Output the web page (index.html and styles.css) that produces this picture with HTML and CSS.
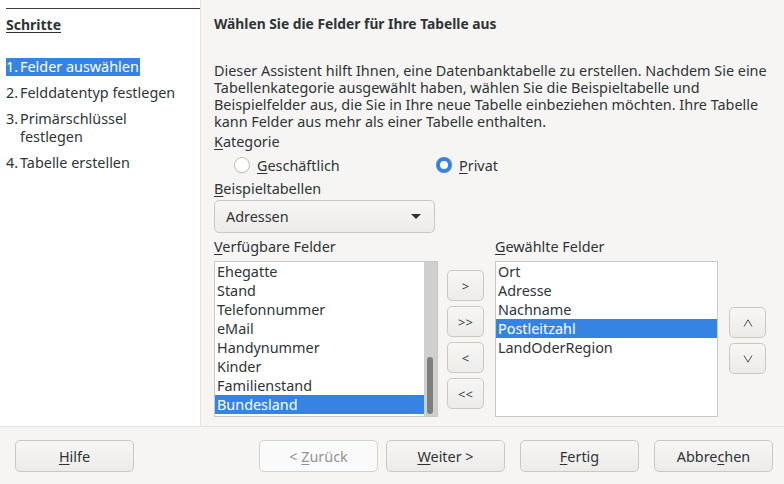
FILE: index.html
```html
<!DOCTYPE html>
<html lang="de">
<head>
<meta charset="utf-8">
<link rel="stylesheet" href="styles.css">
</head>
<body>
<div class="wizard">
  <div class="top">
    <aside class="sidebar">
      <div class="side-head"><span class="side-title">Schritte</span></div>
      <ol class="steps">
        <li class="step"><span class="sel"><span class="num">1.</span>Felder auswählen</span></li>
        <li class="step"><span class="num">2.</span><span>Felddatentyp festlegen</span></li>
        <li class="step"><span class="num">3.</span><span>Primärschlüssel<br>festlegen</span></li>
        <li class="step"><span class="num">4.</span><span>Tabelle erstellen</span></li>
      </ol>
    </aside>
    <main class="main">
      <h1 class="title">Wählen Sie die Felder für Ihre Tabelle aus</h1>
      <div class="intro">
        <div class="line">Dieser Assistent hilft Ihnen, eine Datenbanktabelle zu erstellen. Nachdem Sie eine</div>
        <div class="line">Tabellenkategorie ausgewählt haben, wählen Sie die Beispieltabelle und</div>
        <div class="line">Beispielfelder aus, die Sie in Ihre neue Tabelle einbeziehen möchten. Ihre Tabelle</div>
        <div class="line">kann Felder aus mehr als einer Tabelle enthalten.</div>
      </div>
      <div class="label"><u>K</u>ategorie</div>
      <div class="radios">
        <label class="radio"><span class="circle"></span><span><u>G</u>eschäftlich</span></label>
        <label class="radio"><span class="circle on"></span><span><u>P</u>rivat</span></label>
      </div>
      <div class="label"><u>B</u>eispieltabellen</div>
      <div class="combo"><span>Adressen</span><span class="caret"></span></div>
      <div class="lists">
        <div class="col-left">
          <div class="label"><u>V</u>erfügbare Felder</div>
          <div class="listbox avail">
            <div class="items">
              <div class="item">Ehegatte</div>
              <div class="item">Stand</div>
              <div class="item">Telefonnummer</div>
              <div class="item">eMail</div>
              <div class="item">Handynummer</div>
              <div class="item">Kinder</div>
              <div class="item">Familienstand</div>
              <div class="item selected">Bundesland</div>
            </div>
            <div class="scrollbar"><div class="thumb"></div></div>
          </div>
        </div>
        <div class="movers">
          <button class="btn small"><span>&gt;</span></button>
          <button class="btn small"><span>&gt;&gt;</span></button>
          <button class="btn small"><span>&lt;</span></button>
          <button class="btn small"><span>&lt;&lt;</span></button>
        </div>
        <div class="col-right">
          <div class="label"><u>G</u>ewählte Felder</div>
          <div class="listbox chosen">
            <div class="items">
              <div class="item">Ort</div>
              <div class="item">Adresse</div>
              <div class="item">Nachname</div>
              <div class="item selected">Postleitzahl</div>
              <div class="item">LandOderRegion</div>
            </div>
          </div>
        </div>
        <div class="order">
          <button class="btn small" aria-label="Nach oben"><svg width="10" height="8" viewBox="0 0 10 8"><polyline points="1,7.5 5,0.8 9,7.5" fill="none" stroke="#4a4f51" stroke-width="1"/></svg></button>
          <button class="btn small" aria-label="Nach unten"><svg width="10" height="8" viewBox="0 0 10 8"><polyline points="1,0.5 5,7.2 9,0.5" fill="none" stroke="#4a4f51" stroke-width="1"/></svg></button>
        </div>
      </div>
    </main>
  </div>
  <div class="bottom">
    <button class="btn big"><span><u>H</u>ilfe</span></button>
    <div class="spacer"></div>
    <button class="btn big disabled"><span>&lt; <u>Z</u>urück</span></button>
    <button class="btn big"><span><u>W</u>eiter &gt;</span></button>
    <button class="btn big gap"><span><u>F</u>ertig</span></button>
    <button class="btn big gap"><span>Abbre<u>c</u>hen</span></button>
  </div>
</div>
</body>
</html>
```

FILE: styles.css
```css
* { box-sizing: border-box; }
html, body { margin: 0; padding: 0; }
body {
  width: 784px;
  height: 484px;
  overflow: hidden;
  background: #f6f5f4;
  color: #2e3436;
  font-family: "Noto Sans", "DejaVu Sans", sans-serif;
  font-size: 14.4px;
  line-height: 17px;
}
u { text-decoration: underline; text-underline-offset: 2px; text-decoration-thickness: 1px; }
.wizard { display: flex; flex-direction: column; height: 484px; }
.top { display: flex; height: 426px; }
.sidebar {
  flex: 0 0 201px;
  width: 201px;
  background: #ffffff;
  border-right: 1px solid #e4e1de;
  padding-top: 8px;
  padding-left: 6px;
}
.side-head {
  border-top: 1px solid #3d3d3d;
  padding-top: 7px;
  height: 50px;
}
.side-title { font-weight: bold; font-size: 14px; text-decoration: underline; text-underline-offset: 2px; }
.steps { list-style: none; margin: 0; padding: 0; display: flex; flex-direction: column; gap: 8px; }
.step { display: flex; line-height: 18px; white-space: nowrap; }
.num { display: inline-block; width: 14px; }
.sel { background: #3584e4; color: #ffffff; padding-right: 1px; display: inline-flex; }
.main { flex: 1 1 auto; min-width: 0; padding-left: 13px; padding-right: 14px; }
.title { font-size: 13.8px; font-weight: bold; margin: 0; padding-top: 15px; line-height: 17px; }
.intro { margin: 30px 0 0 0; }
.line { height: 17px; line-height: 17px; white-space: nowrap; }
.label { line-height: 17px; }
.intro + .label { margin-top: 3px; }
.radios { display: flex; height: 26px; align-items: center; padding-left: 20px; margin-top: 2px; }
.radio { display: flex; align-items: center; gap: 7px; }
.radio:first-child { width: 202px; }
.circle {
  width: 16px; height: 16px; border-radius: 50%;
  border: 1px solid #c0bdba; background: #ffffff;
  box-shadow: 0 1px 0 rgba(0,0,0,0.04);
}
.circle.on { border: 4px solid #3584e4; background: #ffffff; }
.radios + .label { margin-top: 2px; }
.combo {
  margin-top: 3px;
  width: 221px; height: 33px;
  border: 1px solid #cdc7c2; border-radius: 5px;
  background: linear-gradient(#f7f6f5, #edebe9);
  display: flex; align-items: center; justify-content: space-between;
  padding: 0 13px 0 11px;
}
.caret { width: 0; height: 0; border-left: 5px solid transparent; border-right: 5px solid transparent; border-top: 5px solid #2e3436; }
.lists { display: flex; margin-top: 5px; }
.col-left { width: 224px; flex: 0 0 224px; }
.col-right { width: 223px; flex: 0 0 223px; }
.listbox {
  margin-top: 6px;
  height: 156px;
  border: 1px solid #cdc7c2;
  background: #ffffff;
  display: flex;
  overflow: hidden;
}
.items { flex: 1; padding-top: 0; }
.item { height: 19px; line-height: 19px; padding-left: 2px; white-space: nowrap; }
.item.selected { background: #3584e4; color: #ffffff; }
.scrollbar { width: 13px; background: #cfcfcf; position: relative; }
.thumb { position: absolute; left: 3px; top: 95px; width: 6px; height: 57px; border-radius: 3px; background: #7e7e7e; }
.movers { flex: 0 0 57px; width: 57px; display: flex; flex-direction: column; gap: 5px; padding-left: 9px; padding-top: 32px; }
.order { display: flex; flex-direction: column; gap: 5px; padding-left: 11px; padding-top: 69px; }
.btn {
  font-family: inherit; font-size: 14.4px; color: #2e3436;
  border: 1px solid #cdc7c2; border-radius: 5px;
  background: linear-gradient(#f7f6f5, #edebe9);
  padding: 0; margin: 0;
  display: flex; align-items: center; justify-content: center;
}
.btn.small { width: 37px; height: 31px; font-size: 13px; color: #3a3f41; }
.bottom { display: flex; border-top: 1px solid #e4e1de; padding: 13px 11px 0 15px; }
.btn.big { width: 119px; height: 32px; }
.btn.gap { margin-left: 15px; }
.btn.disabled { color: #929595; background: #fafafa; border-color: #d5d0cc; margin-right: 8px; }
.spacer { flex: 1; }
```
